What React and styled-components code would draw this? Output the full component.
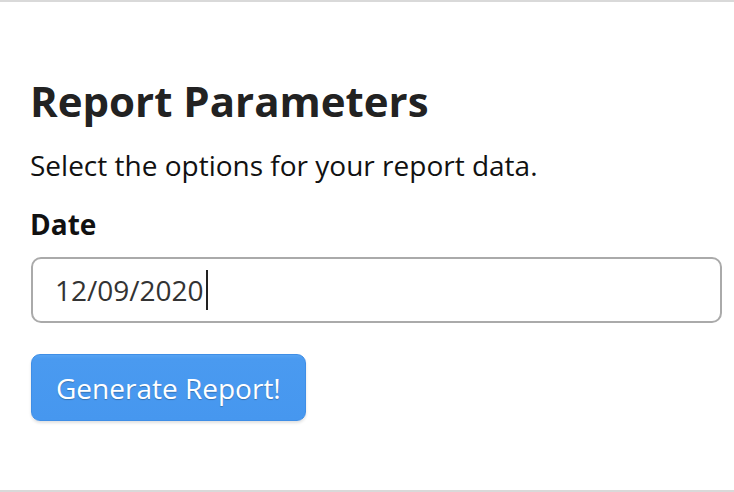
import React from "react";
import styled, { createGlobalStyle } from "styled-components";

const Global = createGlobalStyle`
  html, body { margin: 0; padding: 0; background: #fff; }
  body { font-family: "Open Sans", "Noto Sans", sans-serif; }
  * { box-sizing: border-box; }
`;

const Page = styled.div`
  height: 492px;
  border-top: 2px solid #d9d9d9;
  border-bottom: 2px solid #d9d9d9;
  padding: 74px 12px 0 30px;
  display: flex;
  flex-direction: column;
`;

const Title = styled.h1`
  margin: 0;
  font-size: 42px;
  font-weight: 700;
  color: #222;
  line-height: 50px;
`;

const Subtitle = styled.p`
  margin: 20px 0 0;
  font-size: 28px;
  color: #111;
  line-height: 38px;
`;

const Label = styled.label`
  margin-top: 21px;
  font-size: 28px;
  font-weight: 700;
  color: #111;
  line-height: 38px;
`;

const Input = styled.div`
  margin-top: 14px;
  height: 66px;
  border: 2px solid #aaa;
  border-radius: 10px;
  display: flex;
  align-items: center;
  padding-left: 22px;
  font-size: 28px;
  color: #333;
  margin-left: 1px;
`;

const Caret = styled.span`
  display: inline-block;
  width: 2px;
  height: 40px;
  background: #222;
  margin-left: 2px;
`;

const Button = styled.button`
  margin-top: 31px;
  align-self: flex-start;
  margin-left: 1px;
  height: 67px;
  padding: 0 24px;
  border: 1px solid #3f8ee6;
  border-radius: 9px;
  background: linear-gradient(#55a3f3 0, #4a9af0 4px, #4697ef 100%);
  box-shadow: 0 2px 3px rgba(0,0,0,0.12);
  color: #fff;
  font-family: "Open Sans", "Noto Sans", sans-serif;
  font-size: 28px;
  text-shadow: 0 1px 1px rgba(0,0,0,0.25);
`;

export default function App() {
  return (
    <>
      <Global />
      <Page>
        <Title>Report Parameters</Title>
        <Subtitle>Select the options for your report data.</Subtitle>
        <Label>Date</Label>
        <Input>
          12/09/2020<Caret />
        </Input>
        <Button>Generate Report!</Button>
      </Page>
    </>
  );
}
